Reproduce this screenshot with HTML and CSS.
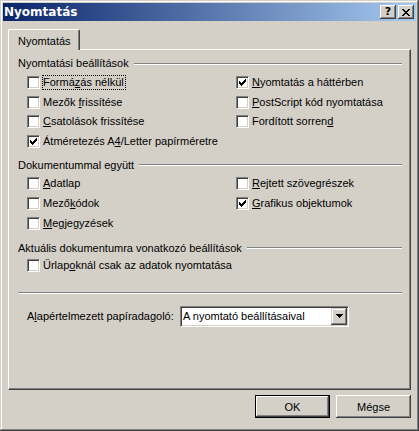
FILE: index.html
```html
<!DOCTYPE html>
<html lang="hu">
<head>
    <meta charset="UTF-8">
    <title>Nyomtatás</title>
    <link rel="stylesheet" href="styles.css">
</head>
<body>
    <div class="window">
        <div class="titlebar">
            <span class="title">Nyomtatás</span>
            <div class="title-buttons">
                <div class="tbtn help">?</div>
                <div class="tbtn close">
                    <svg width="8" height="7" viewBox="0 0 8 7" shape-rendering="crispEdges">
                        <path d="M0 0h2v1h1v1h2v-1h1v-1h2v1h-1v1h-1v1h-1v1h1v1h1v1h1v1h-2v-1h-1v-1h-2v1h-1v1h-2v-1h1v-1h1v-1h1v-1h-1v-1h-1v-1h-1z" fill="#000"/>
                    </svg>
                </div>
            </div>
        </div>

        <div class="tabs">
            <div class="tab active">Nyomtatás</div>
        </div>

        <div class="panel">
            <div class="group-title first"><span>Nyomtatási beállítások</span><i></i></div>
            <div class="checks rows-a">
                <label class="cb"><span class="box"></span><span class="txt focus">Formá<u>z</u>ás nélkül</span></label>
                <label class="cb"><span class="box on"><svg width="7" height="7" viewBox="0 0 7 7" shape-rendering="crispEdges"><path d="M6 0h1v3h-1v1h-1v1h-1v1h-1v1h-1v-1h-1v-1h-1v-3h1v1h1v1h1v-1h1v-1h1z" fill="#000"/></svg></span><span class="txt"><u>N</u>yomtatás a háttérben</span></label>
                <label class="cb"><span class="box"></span><span class="txt">Mezők <u>f</u>rissítése</span></label>
                <label class="cb"><span class="box"></span><span class="txt"><u>P</u>ostScript kód nyomtatása</span></label>
                <label class="cb"><span class="box"></span><span class="txt"><u>C</u>satolások frissítése</span></label>
                <label class="cb"><span class="box"></span><span class="txt">Fordított sorren<u>d</u></span></label>
                <label class="cb wide"><span class="box on"><svg width="7" height="7" viewBox="0 0 7 7" shape-rendering="crispEdges"><path d="M6 0h1v3h-1v1h-1v1h-1v1h-1v1h-1v-1h-1v-1h-1v-3h1v1h1v1h1v-1h1v-1h1z" fill="#000"/></svg></span><span class="txt">Átméretezés A<u>4</u>/Letter papírméretre</span></label>
            </div>

            <div class="group-title second"><span>Dokumentummal együtt</span><i></i></div>
            <div class="checks rows-b">
                <label class="cb"><span class="box"></span><span class="txt"><u>A</u>datlap</span></label>
                <label class="cb"><span class="box"></span><span class="txt"><u>R</u>ejtett szövegrészek</span></label>
                <label class="cb"><span class="box"></span><span class="txt">Mező<u>k</u>ódok</span></label>
                <label class="cb"><span class="box on"><svg width="7" height="7" viewBox="0 0 7 7" shape-rendering="crispEdges"><path d="M6 0h1v3h-1v1h-1v1h-1v1h-1v1h-1v-1h-1v-1h-1v-3h1v1h1v1h1v-1h1v-1h1z" fill="#000"/></svg></span><span class="txt"><u>G</u>rafikus objektumok</span></label>
                <label class="cb"><span class="box"></span><span class="txt"><u>M</u>egjegyzések</span></label>
            </div>

            <div class="group-title third"><span>Aktuális dokumentumra vonatkozó beállítások</span><i></i></div>
            <div class="checks rows-c">
                <label class="cb wide"><span class="box"></span><span class="txt">Űrlap<u>o</u>knál csak az adatok nyomtatása</span></label>
            </div>

            <div class="separator"></div>

            <div class="field">
                <span class="field-label">A<u>l</u>apértelmezett papíradagoló:</span>
                <div class="combo">
                    <span class="combo-value">A nyomtató beállításaival</span>
                    <span class="combo-btn">
                        <svg width="7" height="4" viewBox="0 0 7 4" shape-rendering="crispEdges"><path d="M0 0h7v1h-1v1h-1v1h-1v1h-1v-1h-1v-1h-1v-1h-1z" fill="#000"/></svg>
                    </span>
                </div>
            </div>
        </div>

        <div class="actions">
            <button class="btn default">OK</button>
            <button class="btn">Mégse</button>
        </div>
    </div>
</body>
</html>
```

FILE: styles.css
```css
body { margin: 0; background: #d4d0c8; font-family: "Liberation Sans", Arial, sans-serif; font-size: 11px; color: #000; }
u { text-decoration: underline; text-underline-offset: 1px; }

.window { width: 419px; height: 431px; box-sizing: border-box; padding: 3px; background: #d4d0c8;
    box-shadow: inset -1px -1px #404040, inset 1px 1px #d4d0c8, inset -2px -2px #808080, inset 2px 2px #fff; }

.titlebar { height: 18px; display: flex; align-items: center; justify-content: space-between;
    background: linear-gradient(to right, #0a246a, #a6caf0); }
.title { color: #fff; font-family: "DejaVu Sans", sans-serif; font-weight: bold; font-size: 12px; padding-left: 1px; }
.title-buttons { display: flex; gap: 2px; padding-right: 2px; }
.tbtn { width: 16px; height: 14px; box-sizing: border-box; background: #d4d0c8; display: flex; align-items: center; justify-content: center;
    box-shadow: inset -1px -1px #404040, inset 1px 1px #fff, inset -2px -2px #808080; }
.tbtn.help { font-family: "DejaVu Sans", sans-serif; font-weight: bold; font-size: 11px; line-height: 14px; }

.tabs { display: flex; padding: 8px 5px 0; }
.tab { position: relative; z-index: 1; height: 21px; width: 72px; box-sizing: border-box; padding: 5px 0 0 9px;
    background: #d4d0c8; border-top: 1px solid #fff; border-left: 1px solid #fff; border-right: 1px solid #404040;
    box-shadow: inset -1px 0 #808080; border-radius: 2px 2px 0 0; margin-bottom: -1px; }

.panel { margin: 0 5px; height: 341px; box-sizing: border-box; padding: 0 8px 0 9px;
    border-top: 1px solid #fff; border-left: 1px solid #fff; border-right: 1px solid #404040; border-bottom: 1px solid #404040;
    box-shadow: inset -1px -1px #808080; }

.group-title { display: flex; align-items: center; line-height: 13px; }
.group-title i { flex: 1; height: 0; border-top: 1px solid #808080; border-bottom: 1px solid #fff; margin-left: 5px; }
.group-title.first { margin-top: 7px; }
.group-title.second { margin-top: 11px; }
.group-title.third { margin-top: 12px; }

.checks { display: grid; grid-template-columns: 209px 1fr; padding-left: 9px; }
.rows-a { margin-top: 6px; grid-auto-rows: 13px; row-gap: 6.5px; }
.rows-b { margin-top: 5px; grid-auto-rows: 13px; row-gap: 7px; }
.rows-c { margin-top: 4px; grid-auto-rows: 13px; }
.cb { display: flex; align-items: center; gap: 2px; height: 13px; white-space: nowrap; }
.cb.wide { grid-column: 1 / 3; }
.box { width: 13px; height: 13px; flex: none; box-sizing: border-box; background: #fff; display: flex; align-items: center; justify-content: center;
    border: 1px solid; border-color: #808080 #fff #fff #808080; box-shadow: inset 1px 1px #404040, inset -1px -1px #d4d0c8; }
.txt { border: 1px solid transparent; padding: 0 1px 0 0; line-height: 13px; }
.txt.focus { border: 1px dotted #000; }

.separator { margin-top: 20px; height: 0; border-top: 1px solid #808080; border-bottom: 1px solid #fff; }

.field { display: flex; align-items: center; margin-top: 12px; padding-left: 9px; }
.field-label { width: 153px; flex: none; }
.combo { width: 169px; height: 21px; box-sizing: border-box; display: flex; align-items: center; background: #fff;
    border: 1px solid; border-color: #808080 #fff #fff #808080; box-shadow: inset 1px 1px #404040, inset -1px -1px #d4d0c8; padding: 1px 1px 1px 2px; }
.combo-value { flex: 1; }
.combo-btn { width: 16px; height: 17px; box-sizing: border-box; background: #d4d0c8; display: flex; align-items: center; justify-content: center;
    box-shadow: inset -1px -1px #404040, inset 1px 1px #d4d0c8, inset -2px -2px #808080, inset 2px 2px #fff; }

.actions { display: flex; justify-content: flex-end; gap: 6px; padding: 5px 5px 0; }
.btn { width: 75px; height: 23px; padding: 0; border: none; background: #d4d0c8; font-family: inherit; font-size: 11px; color: #000;
    box-shadow: inset -1px -1px #404040, inset 1px 1px #fff, inset -2px -2px #808080; }
.btn.default { border: 1px solid #000; box-shadow: inset -1px -1px #404040, inset 1px 1px #fff, inset -2px -2px #808080; }
```
